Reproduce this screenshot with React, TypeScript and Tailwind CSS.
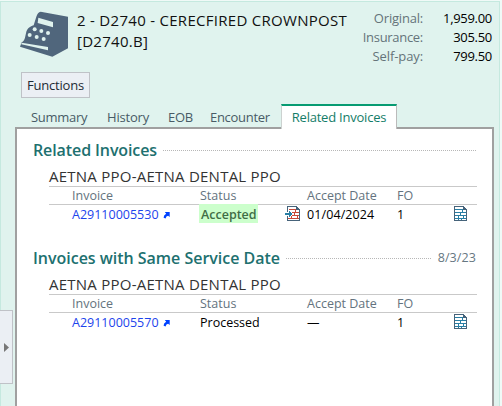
function RegisterIcon() {
  return (
    <svg className="h-[46px] w-[48px] shrink-0" viewBox="60 33 144 138">
      <path fill="#50667c" d="M122 35 204 50V145L157 170 60 140 65 127C74 123 75 113 78 100 81 86 88 80 101 76L109 50Q113 37 122 35Z" />
      <path fill="#e0f3ee" d="M115 53 159 66V82L113 69ZM65 128 144 141V151L64 133Z" />
      <g fill="#e0f3ee">
        <circle cx="104" cy="88" r="6" /><circle cx="124" cy="93" r="6" /><circle cx="144" cy="99" r="6" />
        <circle cx="89" cy="105" r="6" /><circle cx="110" cy="111" r="6" /><circle cx="131" cy="117" r="6" />
      </g>
    </svg>
  );
}

function LinkArrow() {
  return (
    <svg className="ml-[4px] h-[8px] w-[7px]" viewBox="0 0 7 8">
      <path fill="#0042ff" d="M1.8 1H6.7V6L5.1 4.8Q3 5 2.6 7.4L.6 6.8Q.4 4.4 3.2 2.8Z" />
    </svg>
  );
}

function DocIcon() {
  return (
    <svg className="h-[15px] w-[13px]" viewBox="0 0 13 15" shapeRendering="crispEdges">
      <path fill="#fff" stroke="#46637a" d="M.5 .5H9.5L12.5 3.5V14.5H.5Z" />
      <path fill="#46637a" d="M9 0H10V1H11V2H12V3H13V4H9Z" />
      <path stroke="#287fa5" d="M1 3.5H9M1 6.5H12M1 9.5H12M1 12.5H12M8.5 4V7M6.5 7V10M4.5 10V12M9.5 10V12M4.5 12V14M7.5 12V14" />
    </svg>
  );
}

function ImportIcon() {
  return (
    <svg className="-mt-[2px] h-[15px] w-[15px]" viewBox="0 0 15 15" shapeRendering="crispEdges">
      <path fill="#fff" stroke="#46637a" d="M2.5 .5H11.5L14.5 3.5V14.5H2.5Z" />
      <path fill="#46637a" d="M11 0H12V1H13V2H14V3H15V4H11Z" />
      <path stroke="#c8493a" d="M4 3.5H11M7 6.5H14M7 9.5H14M3 12.5H14M10.5 4V7M9.5 7V10M12.5 10V13M6.5 10V13" />
      <path fill="#fff" d="M2 6H4V10H2Z" />
      <path fill="#287fa5" d="M0 7H4V5H5V6H6V7H7V9H6V10H5V11H4V9H0Z" />
    </svg>
  );
}

const cols = "ml-[16px] grid grid-cols-[128px_107px_90px_57px_29px] pl-[23px] w-[428px]";

function Section({ title, titleClass, date, invoice, accepted }: { title: string; titleClass: string; date?: string; invoice: string; accepted?: boolean }) {
  return (
    <section className="h-[108px] pl-[16px] pr-[16px]">
      <div className="flex h-[24px] items-center">
        <h2 className={`shrink-0 text-[16px] leading-[24px] font-semibold text-[#20706f] ${titleClass}`}>{title}</h2>
        <div className="ml-[6px] mt-px h-0 flex-1 border-t border-dotted border-[#b7b7b7]" />
        {date && <span className="ml-[7px] text-[12.5px] tracking-[0.1px] text-[#667782]">{date}</span>}
      </div>
      <div className="ml-[16px] mt-[5px] h-[19px] whitespace-nowrap text-[15px] leading-[19px] tracking-[0.24px] text-[#333]">AETNA PPO-AETNA DENTAL PPO</div>
      <div className={`${cols} h-[19px] border-y border-[#c9c9c9] text-[12.5px] leading-[17px] text-[#64737e]`}>
        <span>Invoice</span><span>Status</span><span>Accept Date</span><span>FO</span>
      </div>
      <div className={`${cols} h-[19px] text-[12.5px] leading-[19px] text-black`}>
        <span className="flex items-center text-[#1c43ec]">{invoice}<LinkArrow /></span>
        <span className="flex items-center justify-between pr-[7px]">
          {accepted ? <><span className="-ml-px -mt-[2px] h-[19px] w-[59px] bg-[#ccffcc] pl-[2px] leading-[21px] font-semibold text-[#406d45]">Accepted</span><ImportIcon /></> : "Processed"}
        </span>
        <span className="tracking-[0.1px]">{accepted ? "01/04/2024" : "—"}</span>
        <span>1</span>
        <span className="pt-px"><DocIcon /></span>
      </div>
    </section>
  );
}

export default function App() {
  return (
    <div className="flex h-[406px] w-[502px] overflow-hidden bg-[#f0faf7] font-['Open_Sans','Noto_Sans',sans-serif]">
      <div className="mt-px flex h-[405px] w-[500px] border-t border-r border-l border-[#c5e9df] bg-[#e0f3ee]">
        <div className="flex w-[14px] shrink-0 flex-col">
          <button className="-ml-px mt-[308px] flex h-[74px] w-[13px] items-center justify-center border border-l-0 border-[#bfc2c7] bg-[#ebeff4]">
            <svg className="h-[9px] w-[5px]" viewBox="0 0 5 9"><path fill="#777" d="M0 0 5 4.5 0 9Z" /></svg>
          </button>
        </div>
        <div className="flex w-[479px] shrink-0 flex-col">
          <header className="flex h-[70px] shrink-0 pl-[5px] pt-[9px]">
            <RegisterIcon />
            <h1 className="-mt-px ml-[9px] w-[275px] whitespace-nowrap text-[15px] leading-[21px] tracking-[0.29px] text-[#111]">2 - D2740 - CERECFIRED CROWNPOST<br />[D2740.B]</h1>
            <dl className="-mt-[2px] grid h-[57px] w-[140px] grid-cols-[71px_69px] text-right text-[13px] leading-[19px] text-black">
              <dt className="tracking-[-0.2px] text-[#65747a]">Original:</dt><dd className="tracking-[-0.3px]">1,959.00</dd>
              <dt className="tracking-[-0.3px] text-[#65747a]">Insurance:</dt><dd className="tracking-[-0.3px]">305.50</dd>
              <dt className="tracking-[-0.1px] text-[#65747a]">Self-pay:</dt><dd className="tracking-[-0.3px]">799.50</dd>
            </dl>
          </header>
          <button className="ml-[6px] h-[26px] w-[69px] shrink-0 border border-[#bfc2c7] bg-[#ebeff4] text-[13px] leading-[24px] tracking-[-0.2px] text-[#1d2a35]">Functions</button>
          <nav className="relative z-10 mt-[6px] -mb-[2px] flex h-[25px] shrink-0 whitespace-nowrap text-[13px] leading-[27px] text-[#485b66]">
            <span className="ml-[16px] w-[76px] tracking-[-0.3px]">Summary</span>
            <span className="w-[61px] tracking-[-0.2px]">History</span>
            <span className="w-[42px] tracking-[-0.3px]">EOB</span>
            <span className="w-[71px] tracking-[-0.3px]">Encounter</span>
            <span className="h-[25px] w-[116px] border-t-2 border-r border-l border-t-[#079b72] border-r-[#bbb] border-l-[#ccd2d0] bg-white text-center leading-[22px] tracking-[-0.22px] text-[#147d68]">Related Invoices</span>
          </nav>
          <main className="flex-1 border-x-2 border-t-2 border-[#a0a0a0] bg-white pt-[9px]">
            <Section title="Related Invoices" titleClass="tracking-[-0.1px]" invoice="A29110005530" accepted />
            <Section title="Invoices with Same Service Date" titleClass="tracking-[-0.02px]" date="8/3/23" invoice="A29110005570" />
          </main>
        </div>
      </div>
    </div>
  );
}
